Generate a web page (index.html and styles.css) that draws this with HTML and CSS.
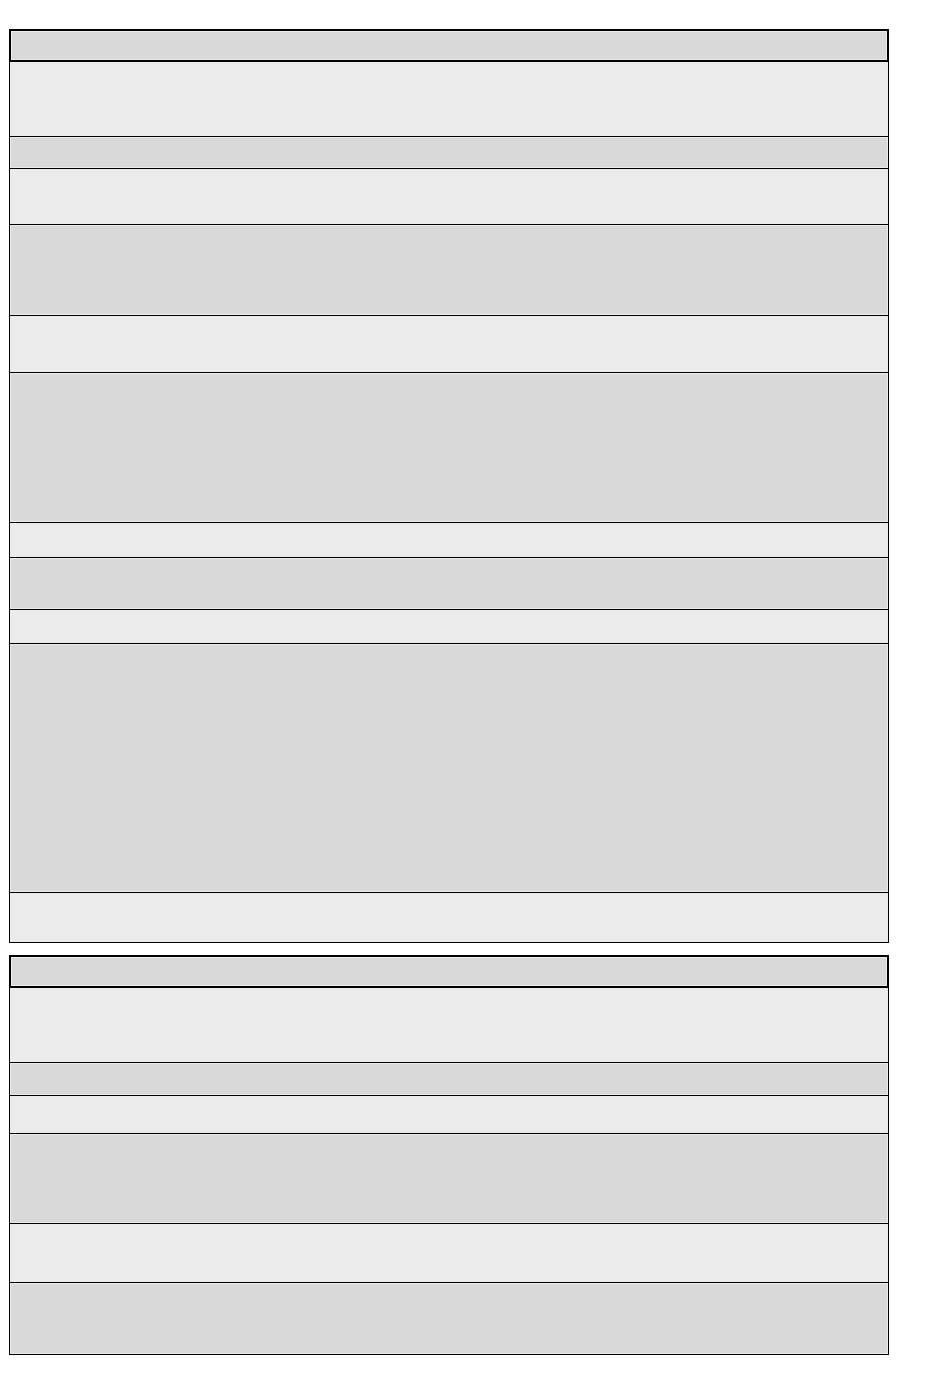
FILE: index.html
```html
<!DOCTYPE html>
<html lang="en">
<head>
  <meta charset="UTF-8">
  <meta name="viewport" content="width=device-width, initial-scale=1.0">
  <title>Panels</title>
  <link rel="stylesheet" href="styles.css">
</head>
<body>
  <div class="page">
    <div class="panel">
      <div class="panel-header"></div>
      <div class="row row-light h-74"></div>
      <div class="row row-dark h-32"></div>
      <div class="row row-light h-56"></div>
      <div class="row row-dark h-91"></div>
      <div class="row row-light h-57"></div>
      <div class="row row-dark h-150"></div>
      <div class="row row-light h-35"></div>
      <div class="row row-dark h-52"></div>
      <div class="row row-light h-34"></div>
      <div class="row row-dark h-249"></div>
      <div class="row row-light h-50"></div>
    </div>

    <div class="panel">
      <div class="panel-header"></div>
      <div class="row row-light h-74"></div>
      <div class="row row-dark h-33"></div>
      <div class="row row-light h-38"></div>
      <div class="row row-dark h-90"></div>
      <div class="row row-light h-59"></div>
      <div class="row row-dark h-72"></div>
    </div>
  </div>
</body>
</html>
```

FILE: styles.css
```css
* {
  box-sizing: border-box;
  margin: 0;
  padding: 0;
}

body {
  font-family: "Liberation Sans", Arial, sans-serif;
  background: #ffffff;
}

.page {
  display: flex;
  flex-direction: column;
  gap: 12px;
  padding: 29px 0 0 9px;
  width: 889px;
}

.panel {
  width: 880px;
  border: 1px solid #000000;
  background: #ebebeb;
}

.panel-header {
  height: 33px;
  margin: -1px -1px 0 -1px;
  border: 2px solid #000000;
  background: #d9d9d9;
  box-shadow: inset 0 0 0 1px #ebebeb;
}

.row {
  border-top: 1px solid #000000;
}

.panel-header + .row {
  border-top: 0;
}

.row-light {
  background: #ebebeb;
}

.row-dark {
  background: #d9d9d9;
  box-shadow: inset 0 0 0 1px #ebebeb;
}

.h-32 { height: 32px; }
.h-33 { height: 33px; }
.h-34 { height: 34px; }
.h-35 { height: 35px; }
.h-38 { height: 38px; }
.h-50 { height: 50px; }
.h-52 { height: 52px; }
.h-56 { height: 56px; }
.h-57 { height: 57px; }
.h-59 { height: 59px; }
.h-72 { height: 72px; }
.h-74 { height: 74px; }
.h-90 { height: 90px; }
.h-91 { height: 91px; }
.h-150 { height: 150px; }
.h-249 { height: 249px; }
```
